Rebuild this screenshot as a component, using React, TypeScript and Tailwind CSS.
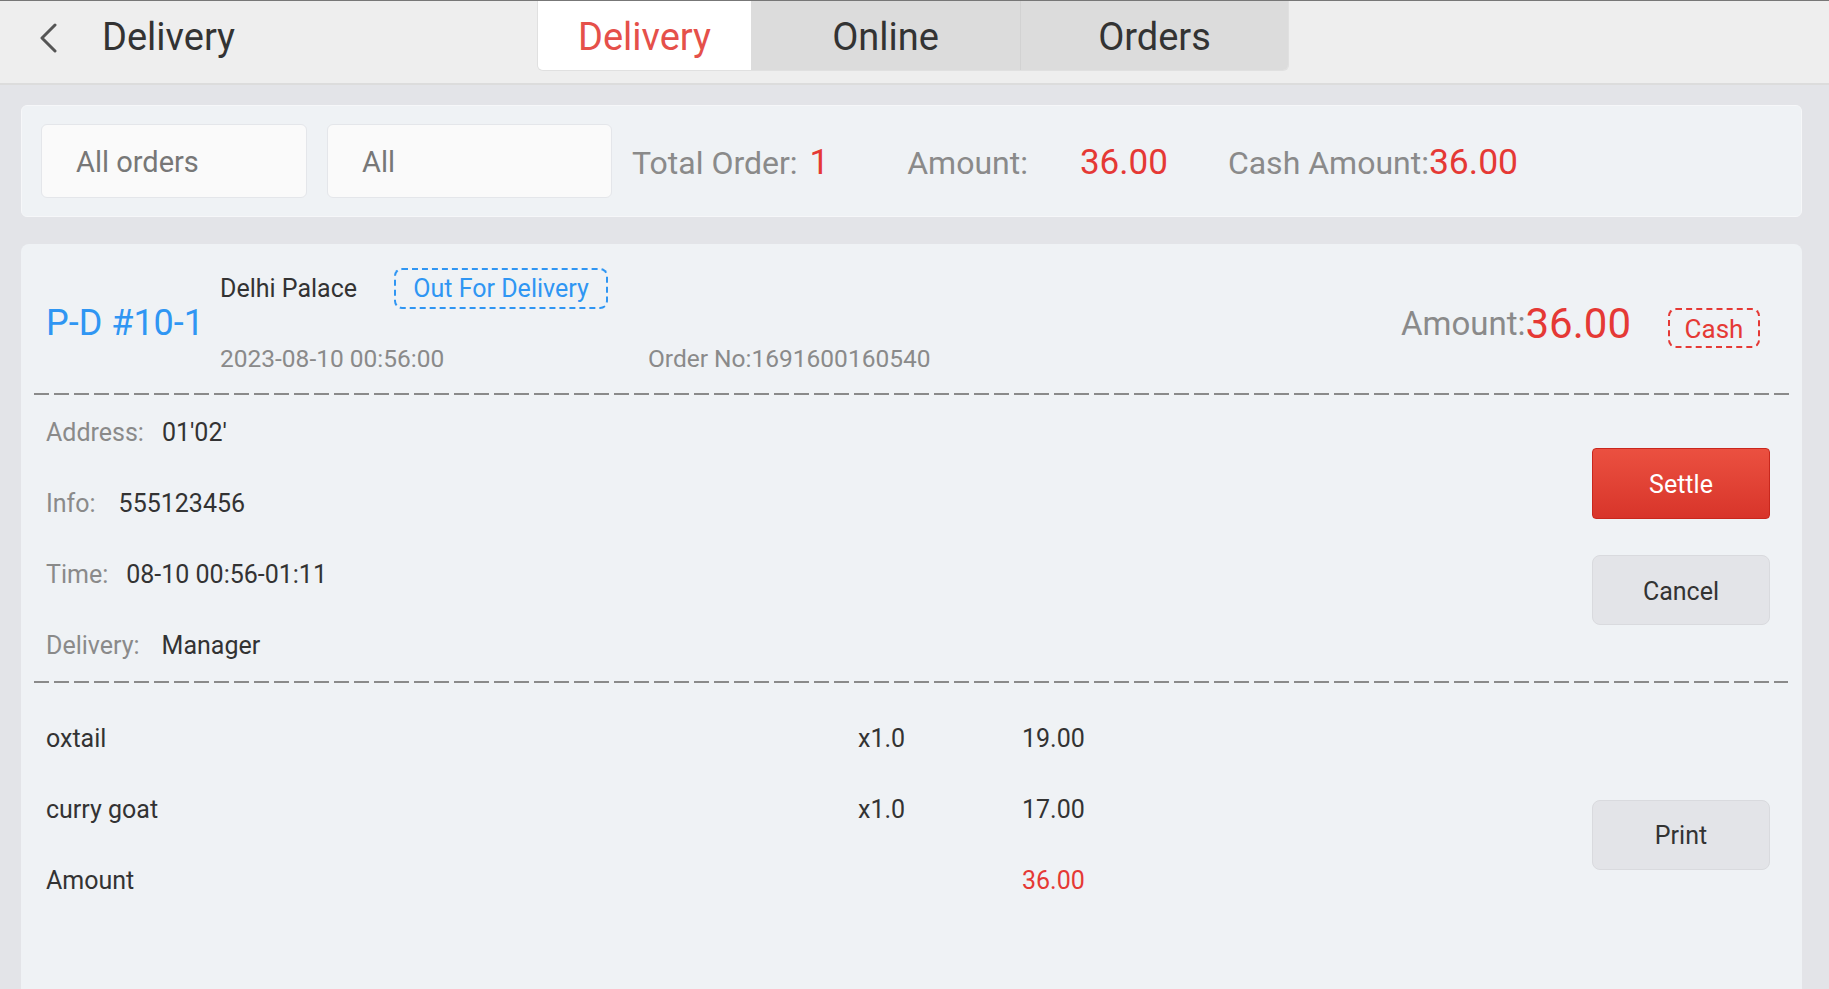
import React from "react";

const Dashed = ({ className }: { className?: string }) => (
  <div
    className={`h-[2px] bg-[repeating-linear-gradient(to_right,#8a8a8a_0_15px,transparent_15px_20px)] ${className ?? ""}`}
  />
);

const InfoRow = ({ label, value, gap }: { label: string; value: string; gap: string }) => (
  <div className="flex h-[71px] items-center text-[25px]">
    <span className="text-[#8a8a8a]">{label}</span>
    <span className={`${gap} text-[#333]`}>{value}</span>
  </div>
);

const ItemRow = ({
  name,
  qty,
  price,
  red,
}: {
  name: string;
  qty?: string;
  price: string;
  red?: boolean;
}) => (
  <div className="flex h-[71px] items-center text-[25px] text-[#333]">
    <span className="w-[812px]">{name}</span>
    <span className="w-[164px]">{qty}</span>
    <span className={red ? "text-[#e53935]" : ""}>{price}</span>
  </div>
);

export default function App() {
  return (
    <div className="h-[989px] w-full overflow-hidden bg-[#e3e4e8] font-['Roboto',sans-serif]">
      {/* top bar */}
      <div className="h-[85px] border-t border-b-2 border-t-[#777] border-b-[#dcdcdc] bg-[#eeeeee]">
        <div className="flex h-[70px]">
          <div className="flex w-[537px] items-center pt-[3px]">
            <svg className="ml-[38px]" width="20" height="30" viewBox="0 0 20 30" fill="none">
              <path d="M17 2 L4 15 L17 28" stroke="#555" strokeWidth="3" strokeLinecap="round" strokeLinejoin="round" />
            </svg>
            <span className="ml-[44px] text-[38px] text-[#333]">Delivery</span>
          </div>
          <div className="flex overflow-hidden rounded-b-md border border-t-0 border-[#e0e0e0] text-[38px]">
            <div className="flex w-[213px] items-center justify-center bg-white pt-[3px] text-[#e5504a]">Delivery</div>
            <div className="flex w-[270px] items-center justify-center border-r border-[#d2d2d2] bg-[#dcdcdc] pt-[3px] text-[#333]">
              Online
            </div>
            <div className="flex w-[267px] items-center justify-center bg-[#dcdcdc] pt-[3px] text-[#333]">Orders</div>
          </div>
        </div>
      </div>

      {/* filter panel */}
      <div className="ml-[21px] mr-[27px] mt-[20px] flex h-[112px] items-center rounded-md border border-[#f6f7f9] bg-[#eff2f5] px-[19px]">
        <div className="flex h-[74px] w-[266px] items-center rounded-md border border-[#e4e6ea] bg-[#fafafa] pl-[34px] pt-[4px] text-[29px] text-[#777]">
          All orders
        </div>
        <div className="ml-[20px] flex h-[74px] w-[285px] items-center rounded-md border border-[#e4e6ea] bg-[#fafafa] pl-[34px] pt-[4px] text-[29px] text-[#777]">
          All
        </div>
        <div className="ml-[20px] flex items-center pt-[4px] text-[32px] text-[#8a8a8a]">
          <span>Total Order:</span>
          <span className="ml-[12px] text-[35px] text-[#e53935]">1</span>
          <span className="ml-[78px]">Amount:</span>
          <span className="ml-[52px] text-[35px] text-[#e53935]">36.00</span>
          <span className="ml-[60px]">Cash Amount:</span>
          <span className="text-[35.5px] text-[#e53935]">36.00</span>
        </div>
      </div>

      {/* order card */}
      <div className="ml-[21px] mr-[27px] mt-[27px] h-[800px] rounded-t-lg bg-[#eff2f5]">
        <div className="flex h-[149px]">
          <div className="flex w-[199px] items-center pl-[25px] pt-[8px] text-[36px] text-[#2f96f3]">P-D #10-1</div>
          <div className="pt-[24px]">
            <div className="flex h-[41px] items-center">
              <span className="text-[25px] text-[#333]">Delhi Palace</span>
              <span className="ml-[37px] flex h-[41px] w-[214px] items-center justify-center rounded-lg border-2 border-dashed border-[#2f96f3] text-[25px] text-[#2f96f3]">
                Out For Delivery
              </span>
            </div>
            <div className="mt-[32px] flex text-[24.5px] text-[#8a8a8a]">
              <span className="w-[428px]">2023-08-10 00:56:00</span>
              <span>Order No:1691600160540</span>
            </div>
          </div>
          <div className="ml-auto flex items-center pr-[42px] pt-[10px]">
            <span className="text-[33px] text-[#8a8a8a]">Amount:</span>
            <span className="text-[42px] text-[#e53935]">36.00</span>
            <span className="ml-[37px] mt-[8px] flex h-[40px] w-[92px] items-center justify-center rounded-lg border-2 border-dashed border-[#e53935] pt-[3px] text-[26px] text-[#e53935]">
              Cash
            </span>
          </div>
        </div>
        <Dashed className="ml-[13px] mr-[10px]" />

        <div className="flex">
          <div className="flex-1 pl-[25px] pt-[2px]">
            <InfoRow label="Address:" value="01'02'" gap="ml-[18px]" />
            <InfoRow label="Info:" value="555123456" gap="ml-[23px]" />
            <InfoRow label="Time:" value="08-10 00:56-01:11" gap="ml-[18px]" />
            <InfoRow label="Delivery:" value="Manager" gap="ml-[22px]" />
          </div>
          <div className="flex flex-col pr-[32px] pt-[53px]">
            <button className="h-[71px] w-[178px] rounded-sm border border-[#c9271d] bg-gradient-to-b from-[#eb5040] to-[#d8342a] pt-[3px] text-[25px] text-white">
              Settle
            </button>
            <button className="mt-[36px] h-[70px] w-[178px] rounded-lg border border-[#d9dade] bg-[#e3e4e8] pt-[3px] text-[25px] text-[#333]">
              Cancel
            </button>
          </div>
        </div>
        <Dashed className="ml-[13px] mr-[14px]" />

        <div className="flex">
          <div className="flex-1 pl-[25px] pt-[20px]">
            <ItemRow name="oxtail" qty="x1.0" price="19.00" />
            <ItemRow name="curry goat" qty="x1.0" price="17.00" />
            <ItemRow name="Amount" price="36.00" red />
          </div>
          <div className="pr-[32px] pt-[117px]">
            <button className="h-[70px] w-[178px] rounded-lg border border-[#d9dade] bg-[#e3e4e8] pt-[2px] text-[25px] text-[#333]">
              Print
            </button>
          </div>
        </div>
      </div>
    </div>
  );
}
